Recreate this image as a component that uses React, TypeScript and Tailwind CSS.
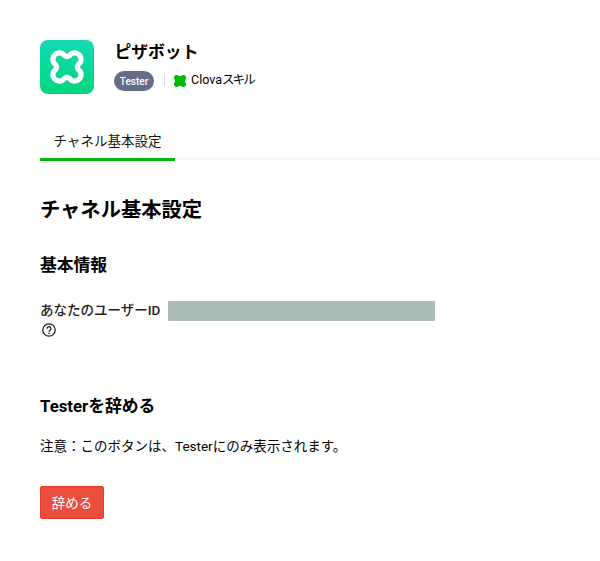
const clover =
  'M-2.4 -11.3 Q0 -9.6 2.4 -11.3 A6.4 6.4 0 1 1 11.3 -2.4 Q9.6 0 11.3 2.4 A6.4 6.4 0 1 1 2.4 11.3 Q0 9.6 -2.4 11.3 A6.4 6.4 0 1 1 -11.3 2.4 Q-9.6 0 -11.3 -2.4 A6.4 6.4 0 1 1 -2.4 -11.3 Z';

function ChannelHeader() {
  return (
    <header className="flex h-[54px] items-start gap-5">
      <div className="flex size-[54px] items-center justify-center rounded-[8px] bg-linear-to-b from-[#13d9b3] to-[#04d67f]">
        <svg viewBox="-18 -18 36 36" className="size-9" fill="none">
          <path d={clover} stroke="#fff" strokeWidth="5.2" strokeLinejoin="round" />
        </svg>
      </div>
      <div className="flex flex-col">
        <h1 className="pl-[0.5px] text-[16.8px] leading-[24px] font-bold">ピザボット</h1>
        <div className="mt-[7px] flex h-5 items-center">
          <span className="flex h-5 w-10 items-center justify-center rounded-full bg-[#646d87] text-[10px] font-medium text-white">
            Tester
          </span>
          <span className="-mt-1 ml-[10px] h-[13px] w-px bg-[#dcdcdc]" />
          <svg viewBox="-14 -14 28 28" className="-mt-px ml-[9px] size-3">
            <path d={clover} fill="#00b900" />
            <rect x="-11.5" y="-11.5" width="23" height="23" rx="4" fill="#00b900" />
          </svg>
          <span className="-mt-[2px] ml-[5px] text-[12.5px] leading-5">
            Clova<span className="tracking-[-1.9px]">スキル</span>
          </span>
        </div>
      </div>
    </header>
  );
}

function HelpIcon() {
  return (
    <svg viewBox="0 0 14 14" className="mt-[3px] ml-[2px] size-[14px]" fill="none" stroke="#222" strokeWidth="1.3">
      <circle cx="7" cy="7" r="6.2" />
      <path d="M5.1 5.7a1.9 1.9 0 1 1 3 1.5C7.4 7.7 7 8 7 8.7" />
      <path d="M7 9.7v1.2" />
    </svg>
  );
}

export default function App() {
  return (
    <div className="h-[561px] w-[600px] overflow-hidden bg-white pt-10 pl-10 font-[Roboto,'Noto_Sans_CJK_JP',sans-serif] text-[13.5px] text-black">
      <ChannelHeader />
      <nav className="mt-[29px] flex h-[38px] items-stretch">
        <a className="w-[135px] border-b-3 border-[#00b900] text-center leading-[36px] text-[#111]">チャネル基本設定</a>
        <span className="mb-px flex-1 border-b-2 border-[#f7f7f7]" />
      </nav>
      <main>
        <h2 className="mt-[34px] text-[20.3px] leading-[30px] font-bold">チャネル基本設定</h2>
        <h3 className="mt-[28px] text-[16.8px] leading-6 font-bold">基本情報</h3>
        <dl className="mt-[23px] flex h-[40px]">
          <dt className="w-32 leading-5 font-medium text-[#1c1c1c]">
            あなたのユーザーID
            <HelpIcon />
          </dt>
          <dd className="mt-px h-5 w-[267px] bg-[#adbdb9]" />
        </dl>
        <h3 className="mt-[54px] text-[16.8px] leading-6 font-bold">Testerを辞める</h3>
        <p className="mt-[18px] leading-5">注意：このボタンは、Testerにのみ表示されます。</p>
        <button className="mt-[30px] flex h-[33px] w-16 items-center justify-center rounded-[2px] border border-[#e53a2b] bg-[#eb4e3d] pt-px text-white">
          辞める
        </button>
      </main>
    </div>
  );
}
